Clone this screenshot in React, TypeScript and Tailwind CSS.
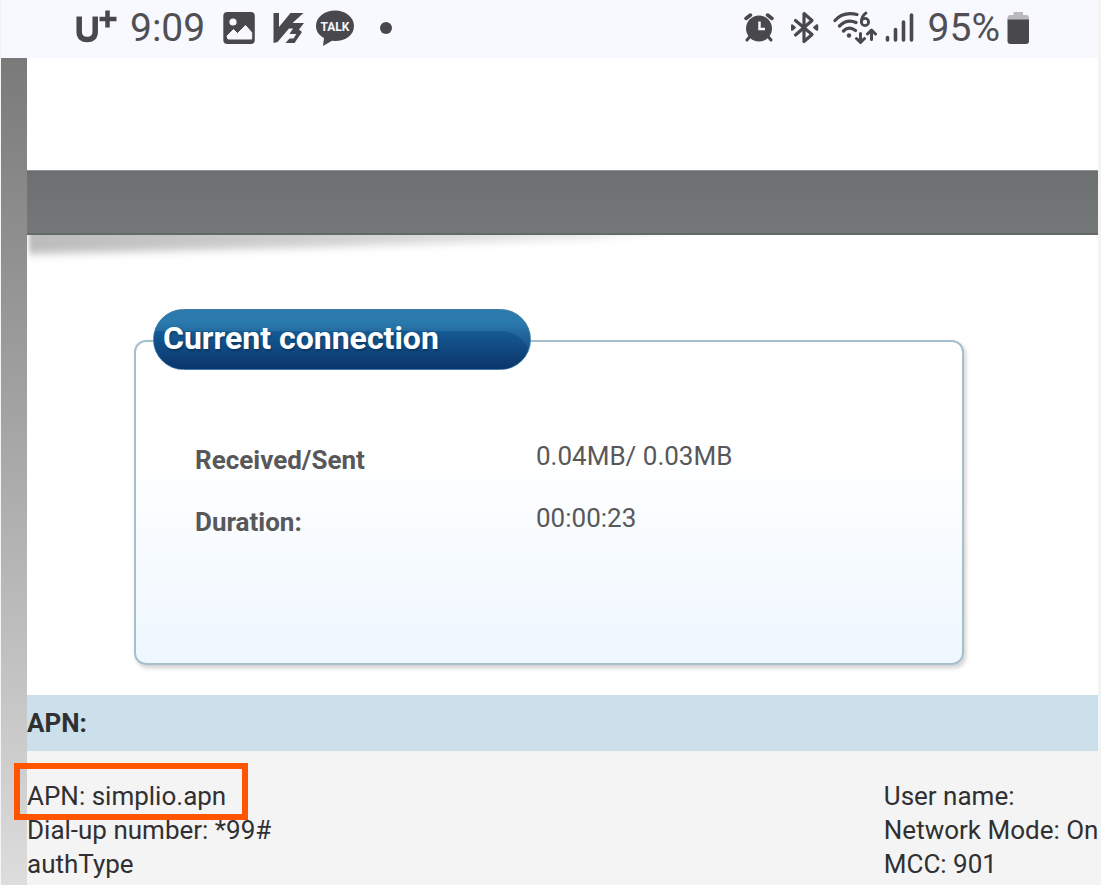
import React from "react";

function CarrierLogo() {
  return (
    <svg className="h-10 w-11" viewBox="0 0 44 40" fill="none" stroke="#49494d" role="img" aria-label="U+">
      <path d="M5.200 8.500v15.500c0 5 3 7.500 8 7.500s8-2.500 8-7.500V8.500" strokeWidth="5.500" />
      <path d="M33.500 2.500v17M25.500 11h17" strokeWidth="4.500" />
    </svg>
  );
}

function PictureIcon() {
  return (
    <svg className="h-10 w-8" viewBox="0 0 32 40" aria-hidden="true">
      <rect x="0.300" y="4" width="31.500" height="32" rx="4" fill="#49494d" />
      <circle cx="10" cy="14" r="3.600" fill="#f8f8ff" />
      <path d="M4 28 10.500 21.500l4 4L22.500 17.500 28.700 24.500v6.500H5z" fill="#f8f8ff" stroke="#f8f8ff" strokeWidth="1" strokeLinejoin="round" />
    </svg>
  );
}

function V3Icon() {
  return (
    <svg className="h-10 w-8" viewBox="0 0 32 40" fill="#49494d" aria-hidden="true">
      <path d="M1.500 5H7V19L18.500 5H31.500L20.500 15H32L27 21.500l3 2.500L22.500 35h-9L17.500 30.500H21.500L24.300 26H17.500L21 20.500H17L5.500 34 1.500 35z" />
    </svg>
  );
}

function TalkIcon() {
  return (
    <svg className="h-10 w-10" viewBox="0 0 40 40" role="img" aria-label="Talk">
      <path d="M20 2.500C9.500 2.500 1 9 1 18c0 5.500 3.200 9.500 8 12L8 38l9-5.200 3 .2c10.500 0 19-6 19-15S30.500 2.500 20 2.500z" fill="#49494d" />
      <text x="20" y="22.500" textAnchor="middle" fill="#f8f8ff" fontSize="12" fontWeight="700" fontFamily="Roboto, sans-serif">
        TALK
      </text>
    </svg>
  );
}

function AlarmIcon() {
  return (
    <svg className="h-10 w-8" viewBox="0 0 32 40" fill="none" stroke="#49494d" strokeLinecap="round" aria-hidden="true">
      <circle cx="16" cy="20.500" r="13" fill="#49494d" stroke="none" />
      <path d="M3 10.500 7.500 7M29 10.500 24.500 7" strokeWidth="3.500" />
      <path d="M6.500 29 4 32M25.500 29l2.500 3" strokeWidth="3" />
      <path d="M16.500 13.500V21H22" stroke="#f8f8ff" strokeWidth="2.500" strokeLinecap="butt" />
    </svg>
  );
}

function BluetoothIcon() {
  return (
    <svg className="h-10 w-7" viewBox="0 0 28 40" fill="none" stroke="#49494d" strokeWidth="3.200" strokeLinejoin="round" strokeLinecap="round" aria-hidden="true">
      <path d="M4.500 12.500 21 26.500 13 33.500V5.500l8 7L4.500 27" />
      <path d="M1 17.500 3.500 19.500l-2.500 2zM26 17.500 23.500 19.500l2.500 2z" strokeWidth="2.500" />
    </svg>
  );
}

function WifiIcon() {
  return (
    <svg className="h-10 w-11" viewBox="0 0 44 40" fill="none" stroke="#49494d" strokeLinecap="round" aria-hidden="true">
      <path d="M2 12.500C8 5.800 15 4.500 24 6.500M6.500 18c5-5 11-6 16.500-3.500M10.500 23c3.500-3.500 8-3.500 12-.5" strokeWidth="3.200" />
      <circle cx="16" cy="27.500" r="2.200" fill="#49494d" stroke="none" />
      <path d="M33 5c-3 2-4.600 5-4.600 9" strokeWidth="2.800" />
      <circle cx="32" cy="14" r="3.600" strokeWidth="2.800" />
      <path d="M27.500 25.500v9M23.500 30.500l4 4 4-4M38.500 31.500V22M34.500 26l4-4 4 4" strokeWidth="3" strokeLinejoin="round" />
    </svg>
  );
}

function SignalIcon() {
  return (
    <svg className="h-10 w-8" viewBox="0 0 32 40" fill="none" stroke="#49494d" strokeWidth="3.600" strokeLinecap="round" aria-hidden="true">
      <path d="M2.500 29.500v2.500M10.500 21.500v10.500M18.500 14v18M26.500 7v25" />
    </svg>
  );
}

function BatteryIcon() {
  return (
    <svg className="h-10 w-6" viewBox="0 0 24 40" aria-hidden="true">
      <path d="M6.500 4H16v3h3q3 0 3 3v2H.5v-2q0-3 3-3h3z" fill="#b9b9be" />
      <path d="M.5 11.500H22v21.500q0 3-3 3H3.500q-3 0-3-3z" fill="#49494d" />
    </svg>
  );
}

function StatusBar() {
  return (
    <header className="flex h-[58px] items-start justify-between bg-[#f8f8ff] pr-[67px] pl-[73px] text-[#505054]">
      <div className="flex items-center pt-[7px]">
        <CarrierLogo />
        <time className="ml-3 text-[39px] leading-[42px] font-normal">9:09</time>
        <div className="ml-[18px] flex items-center">
          <PictureIcon />
          <span className="ml-[17px] flex"><V3Icon /></span>
          <span className="ml-[11px] flex"><TalkIcon /></span>
        </div>
        <span className="ml-[25px] size-3 rounded-full bg-[#49494d]" />
      </div>
      <div className="flex items-center pt-[7px]">
        <AlarmIcon />
        <span className="ml-4 flex"><BluetoothIcon /></span>
        <span className="ml-[14px] flex"><WifiIcon /></span>
        <span className="ml-2 flex"><SignalIcon /></span>
        <span className="ml-[11px] text-[39px] leading-[42px] font-normal">95%</span>
        <span className="ml-[7px] flex"><BatteryIcon /></span>
      </div>
    </header>
  );
}

function Banner() {
  return (
    <div className="relative mt-28 h-[65px] border-t border-b-2 border-t-[#8e9191] border-b-[#646868] bg-linear-to-b from-[#6c7070] to-[#747878]">
      <svg className="absolute top-full left-0 mt-0.5 h-8 w-full" viewBox="0 0 1071 32" preserveAspectRatio="none" aria-hidden="true">
        <defs>
          <linearGradient id="bannerShade" x1="0" x2="1" y1="0" y2="0">
            <stop offset="0" stopColor="#bcbcbc" />
            <stop offset="0.400" stopColor="#d2d2d2" />
            <stop offset="1" stopColor="#ffffff" />
          </linearGradient>
          <filter id="bannerSoft" x="-5%" y="-50%" width="110%" height="200%">
            <feGaussianBlur stdDeviation="2 4" />
          </filter>
        </defs>
        <path d="M2-16H800L560 4 300 12 2 19z" fill="url(#bannerShade)" filter="url(#bannerSoft)" />
      </svg>
    </div>
  );
}

const stats = [
  { label: "Received/Sent", value: "0.04MB/ 0.03MB" },
  { label: "Duration:", value: "00:00:23" },
];

function ConnectionCard() {
  return (
    <section className="relative mt-[105px] mr-[134px] mb-[30px] ml-[107px] h-[325px] rounded-xl border-2 border-[#a5c0ca] bg-linear-to-b from-white from-35% to-[#eef7ff] shadow-[2px_3px_4px_rgba(0,0,0,0.18)]">
      <h2 className="relative -mt-[33px] ml-[17px] h-[61px] w-[378px] overflow-hidden rounded-full border border-[#3d7ba6] bg-linear-to-b from-[#2b7aae] from-20% to-[#0b356b] pl-[9px] text-[32px] leading-[56px] font-bold text-white">
        <span className="absolute inset-x-0 top-[21px] bottom-0 rounded-tr-[28px] bg-linear-to-b from-[#155b95] to-[#0b356b]" />
        <span className="relative [text-shadow:1px_2px_2px_rgba(0,0,0,0.25)]">Current connection</span>
      </h2>
      <dl className="mt-[69px] ml-[59px] flex flex-col gap-7 text-[26px] leading-[34px] text-[#58585a]">
        {stats.map((stat) => (
          <div key={stat.label} className="flex items-start">
            <dt className="mt-1 -mb-1 w-[341px] font-bold">{stat.label}</dt>
            <dd>{stat.value}</dd>
          </div>
        ))}
      </dl>
    </section>
  );
}

function ApnDetails() {
  return (
    <section className="flex grow flex-col text-[26px] leading-[34px] text-[#303032]">
      <h2 className="h-14 bg-[#cbe0eb] leading-[56px] font-bold">APN:</h2>
      <div className="flex grow bg-[#f4f4f4] pt-7">
        <ul className="w-4/5">
          <li className="relative w-fit">
            APN: simplio.apn
            <span className="absolute -top-4 -right-[22px] -bottom-[7px] -left-[13px] border-6 border-[#ff5500]" />
          </li>
          <li>Dial-up number: *99#</li>
          <li>authType</li>
        </ul>
        <ul className="w-1/5 whitespace-nowrap">
          <li>User name:</li>
          <li>Network Mode: On</li>
          <li>MCC: 901</li>
        </ul>
      </div>
    </section>
  );
}

export default function App() {
  return (
    <div className="flex min-h-screen flex-col bg-[#f4f4f4] pr-[3px] pl-px font-['Roboto',sans-serif]">
      <StatusBar />
      <div className="flex grow">
        <div className="w-[26px] shrink-0 bg-linear-to-b from-[#7a7a7a] to-[#dddddd]" />
        <main className="flex min-w-0 grow flex-col bg-white">
          <Banner />
          <ConnectionCard />
          <ApnDetails />
        </main>
      </div>
    </div>
  );
}
